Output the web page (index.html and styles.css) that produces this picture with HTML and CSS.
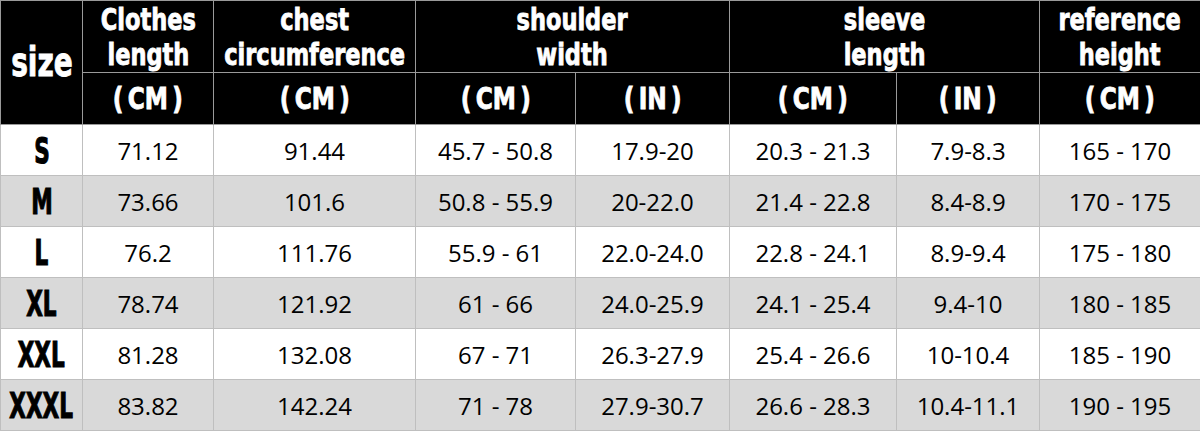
FILE: index.html
```html
<!DOCTYPE html>
<html>
<head>
<meta charset="utf-8">
<link rel="stylesheet" href="styles.css">
</head>
<body>
<table class="sizes">
  <colgroup>
    <col class="c1"><col class="c2"><col class="c3"><col class="c4"><col class="c5"><col class="c6"><col class="c7"><col class="c8">
  </colgroup>
  <thead>
    <tr class="h1">
      <th rowspan="2" class="sizehead"><div class="fit"><span class="imp">size</span></div></th>
      <th><div class="fit"><span class="imp">Clothes<br>length</span></div></th>
      <th><div class="fit"><span class="imp">chest<br>circumference</span></div></th>
      <th colspan="2"><div class="fit"><span class="imp">shoulder<br>width</span></div></th>
      <th colspan="2"><div class="fit"><span class="imp">sleeve<br>length</span></div></th>
      <th><div class="fit"><span class="imp">reference<br>height</span></div></th>
    </tr>
    <tr class="h2">
      <th><div class="fit"><span class="imp">( CM )</span></div></th>
      <th><div class="fit"><span class="imp">( CM )</span></div></th>
      <th><div class="fit"><span class="imp">( CM )</span></div></th>
      <th><div class="fit"><span class="imp">( IN )</span></div></th>
      <th><div class="fit"><span class="imp">( CM )</span></div></th>
      <th><div class="fit"><span class="imp">( IN )</span></div></th>
      <th><div class="fit"><span class="imp">( CM )</span></div></th>
    </tr>
  </thead>
  <tbody>
    <tr><th><div class="fit"><span class="imp">S</span></div></th><td>71.12</td><td>91.44</td><td>45.7 - 50.8</td><td>17.9-20</td><td>20.3 - 21.3</td><td>7.9-8.3</td><td>165 - 170</td></tr>
    <tr class="alt"><th><div class="fit"><span class="imp">M</span></div></th><td>73.66</td><td>101.6</td><td>50.8 - 55.9</td><td>20-22.0</td><td>21.4 - 22.8</td><td>8.4-8.9</td><td>170 - 175</td></tr>
    <tr><th><div class="fit"><span class="imp">L</span></div></th><td>76.2</td><td>111.76</td><td>55.9 - 61</td><td>22.0-24.0</td><td>22.8 - 24.1</td><td>8.9-9.4</td><td>175 - 180</td></tr>
    <tr class="alt"><th><div class="fit"><span class="imp">XL</span></div></th><td>78.74</td><td>121.92</td><td>61 - 66</td><td>24.0-25.9</td><td>24.1 - 25.4</td><td>9.4-10</td><td>180 - 185</td></tr>
    <tr><th><div class="fit"><span class="imp">XXL</span></div></th><td>81.28</td><td>132.08</td><td>67 - 71</td><td>26.3-27.9</td><td>25.4 - 26.6</td><td>10-10.4</td><td>185 - 190</td></tr>
    <tr class="alt"><th><div class="fit"><span class="imp">XXXL</span></div></th><td>83.82</td><td>142.24</td><td>71 - 78</td><td>27.9-30.7</td><td>26.6 - 28.3</td><td>10.4-11.1</td><td>190 - 195</td></tr>
  </tbody>
</table>
</body>
</html>
```
FILE: styles.css
```css
html, body {
  margin: 0;
  padding: 0;
  background: #ffffff;
}

.sizes {
  border-collapse: collapse;
  table-layout: fixed;
  width: 1200px;
  font-family: "Open Sans", "Lato", sans-serif;
}

.c1 { width: 82px; }
.c2 { width: 131px; }
.c3 { width: 202px; }
.c4 { width: 160px; }
.c5 { width: 154px; }
.c6 { width: 167px; }
.c7 { width: 143px; }
.c8 { width: 161px; }

.sizes th,
.sizes td {
  padding: 0;
  text-align: center;
  vertical-align: middle;
  white-space: nowrap;
}

.fit {
  display: flex;
  justify-content: center;
  align-items: center;
  width: 100%;
}

.imp {
  display: block;
  flex: none;
  font-family: "DejaVu Sans", sans-serif;
  font-weight: 700;
  text-align: center;
  transform: scaleX(0.75);
  transform-origin: center;
  -webkit-text-stroke: 0.9px currentColor;
}

.sizes thead th {
  background: #000000;
  color: #ffffff;
  border: 1px solid #9a9a9a;
}

.h1 th {
  height: 71px;
  font-size: 30px;
  line-height: 35px;
}

.h2 th {
  height: 51px;
  font-size: 31px;
  line-height: 35px;
  word-spacing: -5px;
}

.h1 th.sizehead {
  font-size: 40px;
}

.sizehead .imp {
  transform: scaleX(0.7);
}

.sizes tbody td,
.sizes tbody th {
  height: 50px;
  border: 1px solid #bfbfbf;
  color: #000000;
  font-size: 24px;
  font-weight: 400;
}

.sizes tbody th {
  font-size: 36px;
}

.sizes tbody th .imp {
  transform: scaleX(0.6);
  -webkit-text-stroke: 1.2px currentColor;
}

.sizes tbody tr.alt td,
.sizes tbody tr.alt th {
  background: #d9d9d9;
}
```
